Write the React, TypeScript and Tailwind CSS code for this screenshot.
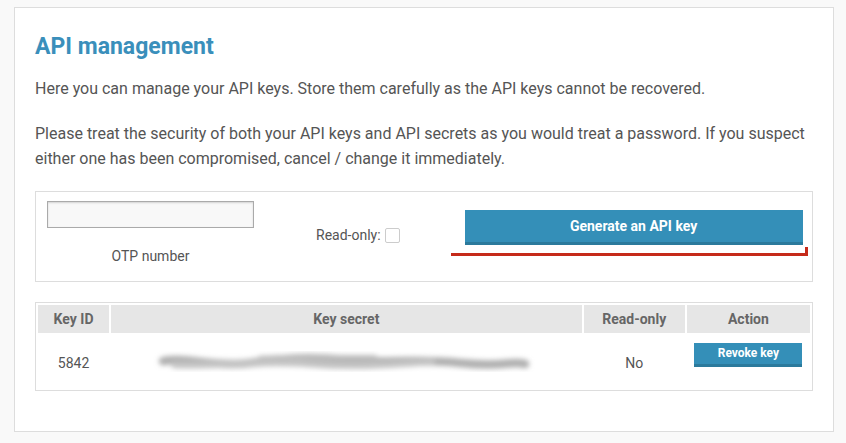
import React from "react";

const headers = [
  { label: "Key ID", w: "w-[71px]" },
  { label: "Key secret", w: "w-[470px]" },
  { label: "Read-only", w: "w-[101px]" },
  { label: "Action", w: "w-[123px]" },
];

const SecretBlur = () => (
  <svg width="400" height="34" viewBox="0 0 420 34" className="mx-auto block">
    <defs>
      <filter id="blur" x="-10%" y="-60%" width="120%" height="220%">
        <feGaussianBlur stdDeviation="2.6" />
      </filter>
    </defs>
    <g filter="url(#blur)" fill="none" strokeLinecap="round">
      <path
        d="M18 15 C 40 10, 70 22, 110 17 S 170 10, 210 14 S 280 12, 330 17 S 380 14, 398 18"
        stroke="#b0b0b0"
        strokeWidth="9"
      />
      <path
        d="M30 19 C 70 21, 120 14, 170 18 S 250 19, 300 16"
        stroke="#c4c4c4"
        strokeWidth="7"
      />
      <path d="M120 12 C 160 9, 200 12, 240 11" stroke="#bdbdbd" strokeWidth="5" />
    </g>
  </svg>
);

export default function App() {
  return (
    <div className="min-h-[443px] w-[846px] bg-[#f9f9f9] pt-[7px] pl-[14px] font-['Roboto',sans-serif] text-[#555]">
      <div className="w-[820px] border border-[#dddddd] bg-white px-5 pt-[26px] pb-[40px]">
        <h1 className="text-[23px] leading-[26px] font-bold text-[#3a8fbb]">
          API management
        </h1>
        <p className="mt-4 text-[16px] leading-[25px]">
          Here you can manage your API keys. Store them carefully as the API keys cannot be
          recovered.
        </p>
        <p className="mt-5 text-[16px] leading-[25px]">
          Please treat the security of both your API keys and API secrets as you would treat a
          password. If you suspect either one has been compromised, cancel / change it
          immediately.
        </p>

        <div className="relative mt-5 flex h-[91px] items-start border border-[#dddddd]">
          <div className="mt-[9px] ml-[11px] flex w-[207px] flex-col items-center">
            <input
              type="text"
              className="h-[27px] w-[207px] border border-[#aaa] bg-[#f8f8f8] shadow-[inset_0_1px_2px_rgba(0,0,0,0.15)] outline-none"
            />
            <span className="mt-[20px] text-[14px] leading-4">OTP number</span>
          </div>
          <div className="mt-[35px] ml-[62px] flex items-center gap-[4px]">
            <span className="text-[14px] leading-4">Read-only:</span>
            <span className="block h-[15px] w-[15px] rounded-[2px] border border-[#ccc] bg-white" />
          </div>
          <button className="mt-[18px] ml-[65px] h-[35px] w-[338px] border-b-[3px] border-[#2b7a9c] bg-[#348fb8] text-[14px] font-bold text-white">
            Generate an API key
          </button>
          <div className="absolute top-[61px] left-[415px] h-[3px] w-[357px] bg-[#c52a1a]" />
          <div className="absolute top-[55px] left-[769px] h-[9px] w-[3px] bg-[#c52a1a]" />
        </div>

        <div className="mt-5 border border-[#dddddd]">
          <table className="w-full border-separate border-spacing-[2px] text-[14px]">
            <thead>
              <tr>
                {headers.map((h) => (
                  <th
                    key={h.label}
                    className={`${h.w} h-[28px] bg-[#e6e6e6] p-0 text-center font-bold text-[#666]`}
                  >
                    {h.label}
                  </th>
                ))}
              </tr>
            </thead>
            <tbody>
              <tr className="h-[53px]">
                <td className="pt-[3px] text-center align-middle">5842</td>
                <td className="pt-[3px] align-middle">
                  <SecretBlur />
                </td>
                <td className="pt-[3px] text-center align-middle">No</td>
                <td className="pt-[7px] text-center align-top">
                  <button className="h-[24px] w-[108px] border-b-[3px] border-[#2b7a9c] bg-[#348fb8] text-[12px] font-bold text-white">
                    Revoke key
                  </button>
                </td>
              </tr>
            </tbody>
          </table>
        </div>
      </div>
    </div>
  );
}
